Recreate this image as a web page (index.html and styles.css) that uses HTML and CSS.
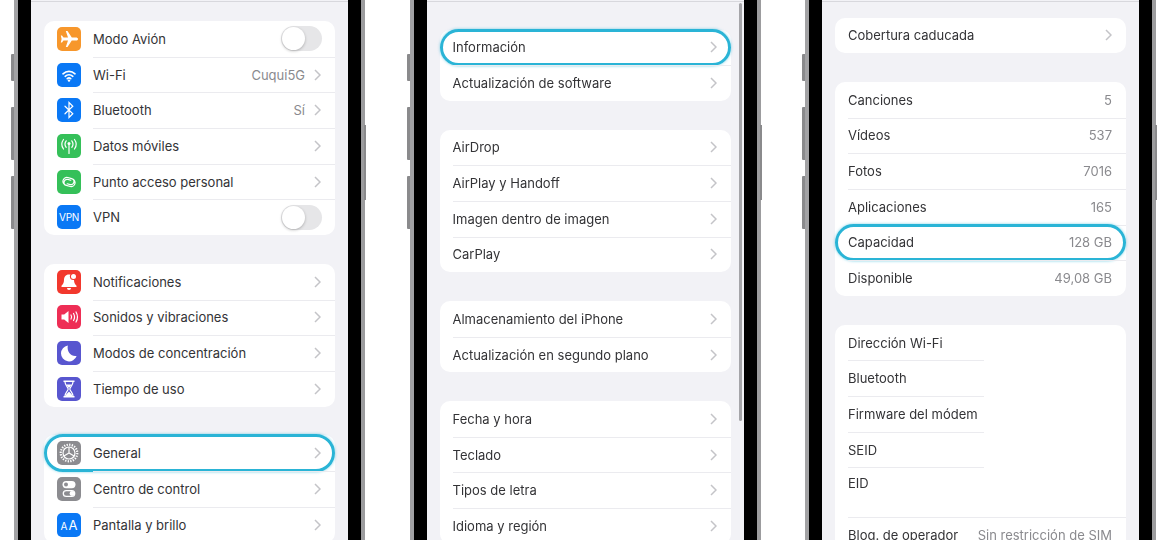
FILE: index.html
```html
<!DOCTYPE html>
<html lang="es">
<head>
    <meta charset="UTF-8">
    <title>Ajustes iPhone</title>
    <link rel="stylesheet" href="styles.css">
</head>
<body>
<div class="page">

    <!-- ajustes -->
    <div class="phone">
        <span class="btn btn-mute"></span><span class="btn btn-up"></span><span class="btn btn-down"></span><span class="btn-power"></span>
        <div class="screen">
            <div class="card">
                <div class="row">
                    <span class="icon orange"><svg viewBox="0 0 24 24"><path d="M21 12c0-1-1-1.500-2.200-1.500h-4L10.500 4H8.800l2.200 6.500H6.500L5 8.500H3.800L4.600 12l-.8 3.500H5l1.500-2H11L8.800 20h1.700l4.300-6.500h4c1.200 0 2.200-.5 2.200-1.500z"/></svg></span>
                    <span class="label">Modo Avión</span>
                    <span class="toggle"></span>
                </div>
                <div class="row">
                    <span class="icon blue"><svg viewBox="0 0 24 24"><path class="line" d="M6 10.800c3.500-3.200 8.500-3.200 12 0M8.200 13.300c2.200-2 5.400-2 7.600 0M10.300 15.600c1-.8 2.400-.8 3.400 0"/><circle cx="12" cy="17.600" r="1.200"/></svg></span>
                    <span class="label">Wi-Fi</span>
                    <span class="value">Cuqui5G</span>
                    <svg class="chev" viewBox="0 0 7 12"><path d="M1 1l5 5-5 5"/></svg>
                </div>
                <div class="row">
                    <span class="icon blue"><svg viewBox="0 0 24 24"><path class="thin" d="M8 8.200l7.800 7.600-3.800 3.700V4.500l3.800 3.700L8 15.800"/></svg></span>
                    <span class="label">Bluetooth</span>
                    <span class="value">Sí</span>
                    <svg class="chev" viewBox="0 0 7 12"><path d="M1 1l5 5-5 5"/></svg>
                </div>
                <div class="row">
                    <span class="icon green"><svg viewBox="0 0 24 24"><path class="thin" d="M12 10v9.500M9.200 6.800c-1.500 2-1.500 4.500 0 6.500M14.800 6.800c1.500 2 1.500 4.500 0 6.500M6.500 5.500c-2.200 3-2.200 6.500 0 9.500M17.500 5.500c2.200 3 2.200 6.500 0 9.500"/><circle cx="12" cy="9.500" r="1.500"/></svg></span>
                    <span class="label">Datos móviles</span>
                    <svg class="chev" viewBox="0 0 7 12"><path d="M1 1l5 5-5 5"/></svg>
                </div>
                <div class="row">
                    <span class="icon green"><svg viewBox="0 0 24 24"><g transform="rotate(15 12 12)"><path class="thin" d="M10.500 15.800H9.700a3.900 3.900 0 0 1 0-7.800h4a3.100 3.100 0 0 1 0 6.200h-3M13.500 8.200h.8a3.900 3.900 0 0 1 0 7.800h-4a3.100 3.100 0 0 1 0-6.200h3"/></g></svg></span>
                    <span class="label">Punto acceso personal</span>
                    <svg class="chev" viewBox="0 0 7 12"><path d="M1 1l5 5-5 5"/></svg>
                </div>
                <div class="row">
                    <span class="icon blue vpn">VPN</span>
                    <span class="label">VPN</span>
                    <span class="toggle"></span>
                </div>
            </div>

            <div class="card">
                <div class="row">
                    <span class="icon red"><svg viewBox="0 0 24 24"><path d="M12 4.500c-3.500 0-5 2.600-5 5.500 0 3-1.200 4.400-2.500 5.800v1.200h15v-1.200C18.200 14.400 17 13 17 10c0-2.900-1.500-5.500-5-5.500z"/><path d="M10 18h4a2 2 0 0 1-4 0z"/><circle class="dot-red" cx="16.500" cy="6.500" r="3.600"/><circle cx="16.500" cy="6.500" r="2.500"/></svg></span>
                    <span class="label">Notificaciones</span>
                    <svg class="chev" viewBox="0 0 7 12"><path d="M1 1l5 5-5 5"/></svg>
                </div>
                <div class="row">
                    <span class="icon pink"><svg viewBox="0 0 24 24"><path d="M4.500 9.500h2.700l4.300-3.500v12l-4.300-3.500H4.500z"/><path class="thin" d="M14 10c.8 1.300.8 2.700 0 4M16.500 8.500c1.400 2.300 1.400 4.700 0 7M19 7c1.900 3.200 1.900 6.800 0 10"/></svg></span>
                    <span class="label">Sonidos y vibraciones</span>
                    <svg class="chev" viewBox="0 0 7 12"><path d="M1 1l5 5-5 5"/></svg>
                </div>
                <div class="row">
                    <span class="icon indigo"><svg viewBox="0 0 24 24"><path d="M10.800 4.500a8 8 0 1 0 8.800 10.400c-5 1.200-10-3.800-8.800-10.400z"/></svg></span>
                    <span class="label">Modos de concentración</span>
                    <svg class="chev" viewBox="0 0 7 12"><path d="M1 1l5 5-5 5"/></svg>
                </div>
                <div class="row">
                    <span class="icon indigo"><svg viewBox="0 0 24 24"><path d="M6.500 3.500h11V5h-11zM6.500 19h11v1.500h-11z"/><path class="thin" d="M8 5c0 3 3 5 3.200 7C11 14 8 16 8 19M16 5c0 3-3 5-3.200 7 .2 2 3.200 4 3.200 7"/><path d="M12 14.500c1 1.200 3 2.500 3.300 4.500H8.700c.3-2 2.300-3.300 3.300-4.500zM9.500 7.500h5c-.5 1.300-1.800 2.400-2.500 3.500-.7-1.100-2-2.200-2.500-3.500z"/></svg></span>
                    <span class="label">Tiempo de uso</span>
                    <svg class="chev" viewBox="0 0 7 12"><path d="M1 1l5 5-5 5"/></svg>
                </div>
            </div>

            <div class="card">
                <div class="row">
                    <span class="icon gray"><svg viewBox="0 0 24 24"><circle class="gear" cx="12" cy="12" r="8.300"/><circle class="thin" cx="12" cy="12" r="6"/><path class="thin" d="M12 12V6.500M12 12l-4.700 2.700M12 12l4.700 2.700"/></svg></span>
                    <span class="label">General</span>
                    <svg class="chev" viewBox="0 0 7 12"><path d="M1 1l5 5-5 5"/></svg>
                    <span class="ring"></span>
                </div>
                <div class="row">
                    <span class="icon gray"><svg viewBox="0 0 24 24"><rect x="5.500" y="4" width="13" height="7.200" rx="3.600"/><circle class="dot-gray" cx="9" cy="7.600" r="2"/><rect class="hollow" x="6.300" y="13.600" width="11.400" height="5.800" rx="2.900"/><circle cx="15" cy="16.500" r="2.400"/></svg></span>
                    <span class="label">Centro de control</span>
                    <svg class="chev" viewBox="0 0 7 12"><path d="M1 1l5 5-5 5"/></svg>
                </div>
                <div class="row">
                    <span class="icon blue aa"><small>A</small>A</span>
                    <span class="label">Pantalla y brillo</span>
                    <svg class="chev" viewBox="0 0 7 12"><path d="M1 1l5 5-5 5"/></svg>
                </div>
            </div>
        </div>
    </div>

    <!-- general -->
    <div class="phone">
        <span class="btn btn-mute"></span><span class="btn btn-up"></span><span class="btn btn-down"></span><span class="btn-power"></span>
        <div class="screen screen-general">
            <span class="scrollbar"></span>
            <div class="card">
                <div class="row">
                    <span class="label">Información</span>
                    <svg class="chev" viewBox="0 0 7 12"><path d="M1 1l5 5-5 5"/></svg>
                    <span class="ring"></span>
                </div>
                <div class="row">
                    <span class="label">Actualización de software</span>
                    <svg class="chev" viewBox="0 0 7 12"><path d="M1 1l5 5-5 5"/></svg>
                </div>
            </div>
            <div class="card">
                <div class="row">
                    <span class="label">AirDrop</span>
                    <svg class="chev" viewBox="0 0 7 12"><path d="M1 1l5 5-5 5"/></svg>
                </div>
                <div class="row">
                    <span class="label">AirPlay y Handoff</span>
                    <svg class="chev" viewBox="0 0 7 12"><path d="M1 1l5 5-5 5"/></svg>
                </div>
                <div class="row">
                    <span class="label">Imagen dentro de imagen</span>
                    <svg class="chev" viewBox="0 0 7 12"><path d="M1 1l5 5-5 5"/></svg>
                </div>
                <div class="row">
                    <span class="label">CarPlay</span>
                    <svg class="chev" viewBox="0 0 7 12"><path d="M1 1l5 5-5 5"/></svg>
                </div>
            </div>
            <div class="card">
                <div class="row">
                    <span class="label">Almacenamiento del iPhone</span>
                    <svg class="chev" viewBox="0 0 7 12"><path d="M1 1l5 5-5 5"/></svg>
                </div>
                <div class="row">
                    <span class="label">Actualización en segundo plano</span>
                    <svg class="chev" viewBox="0 0 7 12"><path d="M1 1l5 5-5 5"/></svg>
                </div>
            </div>
            <div class="card">
                <div class="row">
                    <span class="label">Fecha y hora</span>
                    <svg class="chev" viewBox="0 0 7 12"><path d="M1 1l5 5-5 5"/></svg>
                </div>
                <div class="row">
                    <span class="label">Teclado</span>
                    <svg class="chev" viewBox="0 0 7 12"><path d="M1 1l5 5-5 5"/></svg>
                </div>
                <div class="row">
                    <span class="label">Tipos de letra</span>
                    <svg class="chev" viewBox="0 0 7 12"><path d="M1 1l5 5-5 5"/></svg>
                </div>
                <div class="row">
                    <span class="label">Idioma y región</span>
                    <svg class="chev" viewBox="0 0 7 12"><path d="M1 1l5 5-5 5"/></svg>
                </div>
            </div>
        </div>
    </div>

    <!-- informacion -->
    <div class="phone">
        <span class="btn btn-mute"></span><span class="btn btn-up"></span><span class="btn btn-down"></span><span class="btn-power"></span>
        <div class="screen screen-info">
            <div class="card">
                <div class="row">
                    <span class="label">Cobertura caducada</span>
                    <svg class="chev" viewBox="0 0 7 12"><path d="M1 1l5 5-5 5"/></svg>
                </div>
            </div>
            <div class="card">
                <div class="row"><span class="label">Canciones</span><span class="value">5</span></div>
                <div class="row"><span class="label">Vídeos</span><span class="value">537</span></div>
                <div class="row"><span class="label">Fotos</span><span class="value">7016</span></div>
                <div class="row"><span class="label">Aplicaciones</span><span class="value">165</span></div>
                <div class="row"><span class="label">Capacidad</span><span class="value">128 GB</span><span class="ring"></span></div>
                <div class="row"><span class="label">Disponible</span><span class="value">49,08 GB</span></div>
            </div>
            <div class="card">
                <div class="row row-short"><span class="label">Dirección Wi-Fi</span></div>
                <div class="row row-short"><span class="label">Bluetooth</span></div>
                <div class="row row-short"><span class="label">Firmware del módem</span></div>
                <div class="row row-short"><span class="label">SEID</span></div>
                <div class="row row-eid"><span class="label">EID</span></div>
                <div class="row"><span class="label">Blog. de operador</span><span class="value">Sin restricción de SIM</span></div>
            </div>
        </div>
    </div>

</div>
</body>
</html>
```

FILE: styles.css
```css
html, body {
    margin: 0;
    padding: 0;
    background: #fff;
}
.page {
    width: 1170px;
    height: 540px;
    overflow: hidden;
    display: flex;
    gap: 44.5px;
    padding-left: 14px;
    box-sizing: border-box;
    font-family: "Inter", "Liberation Sans", sans-serif;
    filter: blur(0.35px);
}

/* marco del telefono */
.phone {
    position: relative;
    flex: none;
    width: 351px;
    height: 540px;
    box-sizing: border-box;
    border-left: 4px solid #a2a2a4;
    border-right: 4px solid #9c9c9e;
}
.btn {
    position: absolute;
    left: -7px;
    width: 3px;
    background: #8a8a8c;
    border-radius: 1px 0 0 1px;
}
.btn-mute { top: 54px; height: 27px; }
.btn-up { top: 107px; height: 53px; }
.btn-down { top: 176px; height: 53px; }
.btn-power {
    position: absolute;
    right: -5px;
    top: 125px;
    width: 2px;
    height: 75px;
    background: #8a8a8c;
}
.screen {
    position: relative;
    height: 540px;
    box-sizing: border-box;
    border-left: 13px solid #000;
    border-right: 13px solid #000;
    background: #f2f2f6;
    padding: 21px 13px 0;
    display: flex;
    flex-direction: column;
    gap: 28.8px;
    overflow: hidden;
}
.screen::before {
    content: "";
    position: absolute;
    left: 0;
    right: 0;
    top: 1px;
    height: 1px;
    background: #d8d8dd;
}
.screen-general {
    padding-top: 29.5px;
    gap: 28.7px;
}
.screen-info {
    padding-top: 17.5px;
    gap: 28.7px;
}
.scrollbar {
    position: absolute;
    top: 3px;
    right: 2px;
    width: 3px;
    height: 418px;
    border-radius: 2px;
    background: #a5a5a9;
}

/* tarjetas y filas */
.card {
    flex: none;
    background: #fff;
    border-radius: 10px;
}
.row {
    position: relative;
    height: 35.7px;
    display: flex;
    align-items: center;
    padding: 0 14px 0 13px;
    box-sizing: border-box;
    font-size: 13px;
    color: #333336;
}
.row + .row::before {
    content: "";
    position: absolute;
    top: 0;
    right: 0;
    left: 49px;
    height: 1px;
    background: #ebebef;
}
.screen-general .row + .row::before,
.screen-info .row + .row::before {
    left: 13px;
}
.screen-info .row-short + .row-short::before,
.screen-info .row-short + .row-eid::before {
    right: 142px;
}
.row-eid {
    height: 50px;
    align-items: flex-start;
    padding-top: 8px;
}
.label {
    flex: 1;
    white-space: nowrap;
}
.value {
    color: #8a8a8e;
}
.chev {
    flex: none;
    width: 7px;
    height: 12px;
    margin-left: 9px;
}
.chev path {
    fill: none;
    stroke: #c4c4c8;
    stroke-width: 1.5;
}
.toggle {
    position: relative;
    width: 41px;
    height: 25px;
    margin-right: -1px;
    border-radius: 13px;
    background: #e6e6e8;
}
.toggle::after {
    content: "";
    position: absolute;
    left: 1px;
    top: 1px;
    width: 23px;
    height: 23px;
    border-radius: 50%;
    background: #fff;
    box-shadow: 0 1px 3px rgba(0,0,0,0.25);
}
.ring {
    position: absolute;
    left: 0;
    right: 0;
    top: -1px;
    bottom: -1px;
    border: 3px solid #2ab4d6;
    border-radius: 19px;
    box-shadow: 0 0 3px rgba(42,180,214,0.6);
}

/* iconos */
.icon {
    flex: none;
    width: 24px;
    height: 24px;
    margin-right: 12px;
    border-radius: 5px;
    display: flex;
    align-items: center;
    justify-content: center;
    color: #fff;
}
.icon svg {
    width: 24px;
    height: 24px;
    fill: #fff;
}
.icon .line, .icon .thin, .icon .hollow {
    fill: none;
    stroke: #fff;
    stroke-linecap: round;
}
.icon .line { stroke-width: 1.7; }
.icon .thin { stroke-width: 1.2; }
.icon .hollow { stroke-width: 1.3; }
.icon .gear {
    fill: none;
    stroke: #fff;
    stroke-width: 2.2;
    stroke-dasharray: 1.3 1.3;
}
.icon .dot-red { fill: #f2382d; }
.icon .dot-gray { fill: #8e8e93; }
.orange { background: #f7972c; }
.blue { background: #0a78f5; }
.green { background: #35c059; }
.red { background: #f2382d; }
.pink { background: #ee2e55; }
.indigo { background: #5856cf; }
.gray { background: #8c8c90; }
.vpn {
    font-size: 10px;
    letter-spacing: -0.3px;
}
.aa {
    font-size: 13px;
    gap: 1px;
}
.aa small {
    font-size: 10px;
    margin-top: 2px;
}
```
